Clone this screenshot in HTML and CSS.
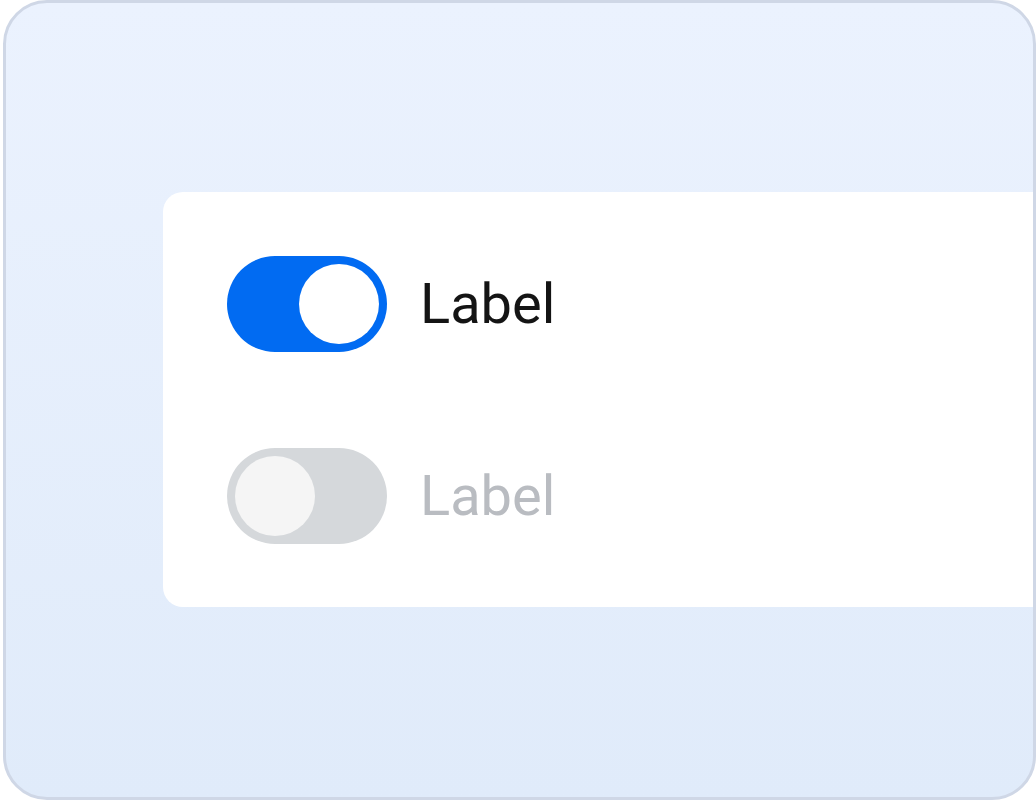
FILE: index.html
```html
<!DOCTYPE html>
<html lang="en">
  <head>
    <meta charset="UTF-8" />
    <meta name="viewport" content="width=device-width, initial-scale=1.0" />
    <link rel="stylesheet" href="styles.css">
    <title>Toggle</title>
  </head>
  <body>
    <div class="frame">
      <div class="card">
        <label class="toggle-row">
          <span class="toggle toggle--on"><span class="toggle__knob"></span></span>
          <span class="toggle-row__label">Label</span>
        </label>
        <label class="toggle-row toggle-row--disabled">
          <span class="toggle toggle--disabled"><span class="toggle__knob"></span></span>
          <span class="toggle-row__label">Label</span>
        </label>
      </div>
    </div>
  </body>
</html>
```

FILE: styles.css
```css
html,
body {
  margin: 0;
  padding: 0;
}
body {
  font-family: Roboto, "Liberation Sans", sans-serif;
  background: #ffffff;
}
.frame {
  box-sizing: border-box;
  width: 1033px;
  height: 800px;
  margin-left: 3px;
  border: 3px solid #cfd7e6;
  border-radius: 44px;
  background: linear-gradient(180deg, #ebf2fe 0%, #e0ebfa 100%);
  overflow: hidden;
  padding: 189px 0 0 157px;
}
.card {
  width: 960px;
  background: #ffffff;
  border-radius: 20px;
  padding: 64px;
  padding-bottom: 63px;
  display: flex;
  flex-direction: column;
  gap: 96px;
}
.toggle-row {
  display: flex;
  align-items: center;
  gap: 33px;
}
.toggle-row__label {
  font-size: 56px;
  line-height: 64px;
  color: #141414;
}
.toggle-row--disabled .toggle-row__label {
  color: #b9bcc1;
}
.toggle {
  box-sizing: border-box;
  width: 160px;
  height: 96px;
  border-radius: 48px;
  padding: 8px;
  display: flex;
}
.toggle__knob {
  width: 80px;
  height: 80px;
  border-radius: 50%;
}
.toggle--on {
  background: #016bf2;
  justify-content: flex-end;
}
.toggle--on .toggle__knob {
  background: #ffffff;
}
.toggle--disabled {
  background: #d5d8db;
  justify-content: flex-start;
}
.toggle--disabled .toggle__knob {
  background: #f5f5f5;
}
```
